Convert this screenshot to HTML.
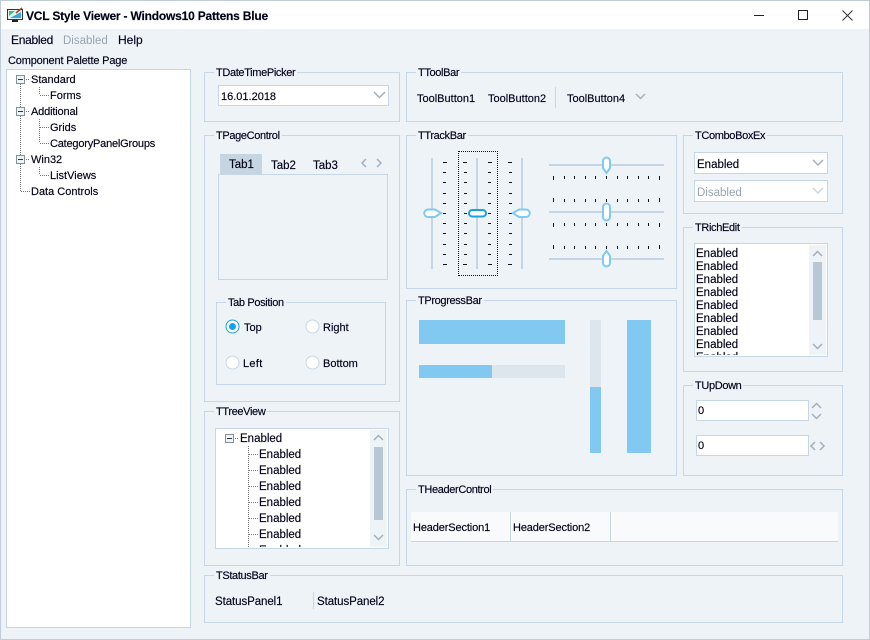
<!DOCTYPE html>
<html><head><meta charset="utf-8"><style>
html,body{margin:0;padding:0}
body{width:870px;height:640px;overflow:hidden;position:relative;background:#eef3f8;font:11px/14px "Liberation Sans",Arial,sans-serif;color:#000018;-webkit-text-stroke:.15px #000018}
.b,.f,.t,.l{position:absolute;box-sizing:border-box}
.b{border:1px solid #c6d6e5}
.f{background:#fff;border:1px solid #c6d6e5}
.t{white-space:nowrap;margin-top:1px}
.e{font-size:11.5px}
.l{white-space:nowrap;background:#eef3f8;padding:0 2px;margin-left:-2px;margin-top:1px;letter-spacing:-.35px;font-size:11px}
svg{position:absolute;left:0;top:0}
.clip{position:absolute;overflow:hidden}
.d{color:#98a4b0;-webkit-text-stroke:0}
</style></head><body>
<div class="b" style="left:0;top:0;width:870px;height:640px;border-color:#c0ccd8"></div>
<div style="position:absolute;left:1px;top:1px;width:868px;height:28px;background:#fff"></div>
<div class="t" style="left:26px;top:9px;margin-top:0;font-weight:bold;font-size:12px;letter-spacing:-.2px">VCL Style Viewer - Windows10 Pattens Blue</div>
<div class="t e" style="left:11px;top:33px;margin-top:0;font-size:12px;letter-spacing:-.3px">Enabled</div>
<div class="t e d" style="left:63px;top:33px">Disabled</div>
<div class="t" style="left:118px;top:33px;margin-top:0;font-size:12px">Help</div>
<div class="t" style="left:8px;top:53px;letter-spacing:-.17px">Component Palette Page</div>

<div class="f" style="left:6px;top:69px;width:185px;height:559px"></div>
<div class="t" style="left:31px;top:72px">Standard</div>
<div class="t" style="left:50px;top:88px">Forms</div>
<div class="t" style="left:31px;top:104px;letter-spacing:-.16px">Additional</div>
<div class="t" style="left:50px;top:120px">Grids</div>
<div class="t" style="left:50px;top:136px;letter-spacing:-.2px">CategoryPanelGroups</div>
<div class="t" style="left:31px;top:152px">Win32</div>
<div class="t" style="left:50px;top:168px">ListViews</div>
<div class="t" style="left:31px;top:184px">Data Controls</div>

<div class="b" style="left:204px;top:72px;width:196px;height:50px"></div>
<div class="l" style="left:216px;top:65px">TDateTimePicker</div>
<div class="f" style="left:218px;top:85px;width:171px;height:21px"></div>
<div class="t" style="left:221px;top:89px">16.01.2018</div>

<div class="b" style="left:204px;top:135px;width:196px;height:267px"></div>
<div class="l" style="left:216px;top:128px">TPageControl</div>
<div style="position:absolute;left:220px;top:154px;width:42px;height:21px;background:#c5d5e2"></div>
<div class="b" style="left:218px;top:174px;width:170px;height:106px"></div>
<div class="t e" style="left:229px;top:157px">Tab1</div>
<div class="t e" style="left:271px;top:158px">Tab2</div>
<div class="t e" style="left:313px;top:158px">Tab3</div>
<div class="b" style="left:216px;top:302px;width:170px;height:83px"></div>
<div class="l" style="left:228px;top:295px">Tab Position</div>
<div class="t" style="left:244px;top:320px">Top</div>
<div class="t" style="left:323px;top:320px">Right</div>
<div class="t" style="left:243px;top:356px;letter-spacing:.3px">Left</div>
<div class="t" style="left:323px;top:356px">Bottom</div>

<div class="b" style="left:204px;top:411px;width:196px;height:155px"></div>
<div class="l" style="left:216px;top:404px">TTreeView</div>
<div class="f" style="left:215px;top:428px;width:174px;height:121px"></div>
<div style="position:absolute;left:370px;top:430px;width:17px;height:117px;background:#eef3f8"></div>
<div style="position:absolute;left:374px;top:447px;width:9px;height:73px;background:#b8c7d4"></div>
<div class="t e" style="left:240px;top:431px">Enabled</div>
<div class="clip e" style="left:259px;top:446px;width:60px;height:101px">
<div class="t" style="left:0;top:1px">Enabled</div>
<div class="t" style="left:0;top:17px">Enabled</div>
<div class="t" style="left:0;top:33px">Enabled</div>
<div class="t" style="left:0;top:49px">Enabled</div>
<div class="t" style="left:0;top:65px">Enabled</div>
<div class="t" style="left:0;top:81px">Enabled</div>
<div class="t" style="left:0;top:97px">Enabled</div>
</div>

<div class="b" style="left:204px;top:575px;width:639px;height:48px"></div>
<div class="l" style="left:216px;top:568px">TStatusBar</div>
<div class="t e" style="left:215px;top:594px;letter-spacing:-.08px">StatusPanel1</div>
<div style="position:absolute;left:313px;top:592px;width:1px;height:17px;background:#c6d6e5"></div>
<div class="t e" style="left:317px;top:594px;letter-spacing:-.08px">StatusPanel2</div>

<div class="b" style="left:406px;top:72px;width:437px;height:50px"></div>
<div class="l" style="left:418px;top:65px">TToolBar</div>
<div class="t" style="left:417px;top:91px">ToolButton1</div>
<div class="t" style="left:488px;top:91px">ToolButton2</div>
<div style="position:absolute;left:555px;top:87px;width:1px;height:21px;background:#c6d6e5"></div>
<div class="t" style="left:567px;top:91px">ToolButton4</div>

<div class="b" style="left:406px;top:135px;width:271px;height:154px"></div>
<div class="l" style="left:418px;top:128px">TTrackBar</div>

<div class="b" style="left:406px;top:300px;width:271px;height:176px"></div>
<div class="l" style="left:418px;top:293px">TProgressBar</div>

<div class="b" style="left:683px;top:135px;width:160px;height:79px"></div>
<div class="l" style="left:695px;top:128px">TComboBoxEx</div>
<div class="f" style="left:694px;top:152px;width:134px;height:22px"></div>
<div class="t e" style="left:697px;top:157px">Enabled</div>
<div class="f" style="left:694px;top:180px;width:134px;height:22px"></div>
<div class="t e d" style="left:697px;top:185px">Disabled</div>

<div class="b" style="left:683px;top:227px;width:160px;height:145px"></div>
<div class="l" style="left:695px;top:220px">TRichEdit</div>
<div class="f" style="left:694px;top:243px;width:134px;height:114px"></div>
<div style="position:absolute;left:809px;top:245px;width:17px;height:110px;background:#eef3f8"></div>
<div style="position:absolute;left:813px;top:262px;width:9px;height:58px;background:#b8c7d4"></div>
<div class="clip e" style="left:696px;top:245px;width:60px;height:110px">
<div class="t" style="left:0;top:1px">Enabled</div>
<div class="t" style="left:0;top:14px">Enabled</div>
<div class="t" style="left:0;top:27px">Enabled</div>
<div class="t" style="left:0;top:40px">Enabled</div>
<div class="t" style="left:0;top:53px">Enabled</div>
<div class="t" style="left:0;top:66px">Enabled</div>
<div class="t" style="left:0;top:79px">Enabled</div>
<div class="t" style="left:0;top:92px">Enabled</div>
<div class="t" style="left:0;top:105px">Enabled</div>
</div>

<div class="b" style="left:683px;top:385px;width:160px;height:91px"></div>
<div class="l" style="left:695px;top:378px">TUpDown</div>
<div class="f" style="left:696px;top:400px;width:113px;height:21px"></div>
<div class="t" style="left:698px;top:403px">0</div>
<div class="f" style="left:696px;top:435px;width:113px;height:21px"></div>
<div class="t" style="left:698px;top:438px">0</div>

<div class="b" style="left:406px;top:489px;width:437px;height:77px"></div>
<div class="l" style="left:418px;top:482px">THeaderControl</div>
<div style="position:absolute;left:411px;top:512px;width:427px;height:30px;background:#f8fafc;border-bottom:1px solid #c6d6e5;box-sizing:border-box"></div>
<div style="position:absolute;left:510px;top:512px;width:1px;height:29px;background:#c6d6e5"></div>
<div style="position:absolute;left:610px;top:512px;width:1px;height:29px;background:#c6d6e5"></div>
<div class="t" style="left:413px;top:520px;letter-spacing:-.13px">HeaderSection1</div>
<div class="t" style="left:513px;top:520px;letter-spacing:-.13px">HeaderSection2</div>

<div style="position:absolute;left:458px;top:151px;width:40px;height:125px;box-sizing:border-box;border:1px dotted #111"></div>

<svg width="870" height="640" viewBox="0 0 870 640" fill="none">
<!-- app icon -->
<rect x="7.5" y="9.5" width="15" height="10" fill="#e8f4f4" stroke="#333"/>
<path d="M9 11h6l-6 5z" fill="#35c46a"/><path d="M10 18l11-6v6z" fill="#35a8e0"/>
<path d="M16 13l6-5" stroke="#b03a2e" stroke-width="1.5"/>
<path d="M12 21h6" stroke="#222" stroke-width="2"/>
<!-- window buttons -->
<path d="M754 15.5h10" stroke="#222"/>
<rect x="798.5" y="10.5" width="9" height="9" stroke="#222"/>
<path d="M842.5 10.5l10 10M852.5 10.5l-10 10" stroke="#333"/>
<!-- tree lines left -->
<g stroke="#777" stroke-dasharray="1 1">
<path d="M20.5 84V191M26 79.5h4M26 111.5h4M26 159.5h4M21 191.5h9"/>
<path d="M39.5 87V95M40 95.5h9M39.5 119V143M40 127.5h9M40 143.5h9M39.5 167V175M40 175.5h9"/>
<path d="M235 438.5h4M248.5 446V547M249 454.5h9M249 470.5h9M249 486.5h9M249 502.5h9M249 518.5h9M249 534.5h9"/>
</g>
<g fill="#eef3f8" stroke="#8a8f95">
<rect x="16.5" y="75.5" width="8" height="8"/><rect x="16.5" y="107.5" width="8" height="8"/><rect x="16.5" y="155.5" width="8" height="8"/>
<rect x="225.5" y="434.5" width="8" height="8"/>
</g>
<path d="M18 79.5h5M18 111.5h5M18 159.5h5M227 438.5h5" stroke="#333"/>
<!-- chevrons -->
<g stroke="#a3afbc" stroke-width="1.5">
<path d="M374 92l5.500 5.500 5.500-5.500"/>
<path d="M636 94l4.500 4.500 4.500-4.500"/>
<path d="M366 159l-4 4 4 4M377 159l4 4-4 4"/>
<path d="M813 160l5 5 5-5"/>
<path d="M813 188l5 5 5-5" stroke="#ccd5de"/>
<path d="M374 440l4.500-4.500 4.500 4.500M374 535l4.500 4.500 4.500-4.500"/>
<path d="M813 256l4.500-4.500 4.500 4.500M813 344l4.500 4.500 4.500-4.500"/>
<path d="M812 408l4.500-4.500 4.500 4.500M812 414l4.500 4.500 4.500-4.500"/>
<path d="M815 442l-4 4 4 4M820 442l4 4-4 4"/>
</g>
<!-- radios -->
<circle cx="232.500" cy="326.500" r="6.500" fill="#fff" stroke="#1ba1e2"/>
<circle cx="232.500" cy="326.500" r="3.500" fill="#1ba1e2"/>
<circle cx="312.500" cy="326.500" r="6.500" fill="#fff" stroke="#c6d6e5"/>
<circle cx="232.500" cy="362.500" r="6.500" fill="#fff" stroke="#c6d6e5"/>
<circle cx="312.500" cy="362.500" r="6.500" fill="#fff" stroke="#c6d6e5"/>
<!-- progress -->
<g shape-rendering="crispEdges">
<rect x="419" y="320" width="146" height="24" fill="#82c9f1"/>
<rect x="419" y="365" width="146" height="13" fill="#dde5ed"/>
<rect x="419" y="365" width="73" height="13" fill="#82c9f1"/>
<rect x="590" y="320" width="11" height="133" fill="#dde5ed"/>
<rect x="590" y="387" width="11" height="66" fill="#82c9f1"/>
<rect x="627" y="320" width="24" height="133" fill="#82c9f1"/>
</g>
<!-- track bars -->
<g shape-rendering="crispEdges" fill="#c6d5e3">
<rect x="431" y="158" width="2" height="111"/><rect x="476" y="158" width="2" height="111"/><rect x="521" y="158" width="2" height="111"/>
<rect x="549" y="164" width="115" height="2"/><rect x="549" y="211" width="115" height="2"/><rect x="549" y="258" width="115" height="2"/>
</g>
<g shape-rendering="crispEdges" fill="#111">
<path d="M443 162h4v1h-4zM443 172h3v1h-3zM443 182h3v1h-3zM443 193h3v1h-3zM443 203h3v1h-3zM443 213h3v1h-3zM443 223h3v1h-3zM443 233h3v1h-3zM443 244h3v1h-3zM443 254h3v1h-3zM443 264h4v1h-4z"/>
<path d="M463 162h4v1h-4zM464 172h3v1h-3zM464 182h3v1h-3zM464 193h3v1h-3zM464 203h3v1h-3zM464 213h3v1h-3zM464 223h3v1h-3zM464 233h3v1h-3zM464 244h3v1h-3zM464 254h3v1h-3zM463 264h4v1h-4z"/>
<path d="M488 162h4v1h-4zM488 172h3v1h-3zM488 182h3v1h-3zM488 193h3v1h-3zM488 203h3v1h-3zM488 213h3v1h-3zM488 223h3v1h-3zM488 233h3v1h-3zM488 244h3v1h-3zM488 254h3v1h-3zM488 264h4v1h-4z"/>
<path d="M508 162h4v1h-4zM509 172h3v1h-3zM509 182h3v1h-3zM509 193h3v1h-3zM509 203h3v1h-3zM509 213h3v1h-3zM509 223h3v1h-3zM509 233h3v1h-3zM509 244h3v1h-3zM509 254h3v1h-3zM508 264h4v1h-4z"/>
<path d="M553 176h1v4h-1zM564 176h1v3h-1zM574 176h1v3h-1zM585 176h1v3h-1zM595 176h1v3h-1zM606 176h1v3h-1zM617 176h1v3h-1zM627 176h1v3h-1zM638 176h1v3h-1zM648 176h1v3h-1zM659 176h1v4h-1z"/>
<path d="M553 198h1v4h-1zM564 199h1v3h-1zM574 199h1v3h-1zM585 199h1v3h-1zM595 199h1v3h-1zM606 199h1v3h-1zM617 199h1v3h-1zM627 199h1v3h-1zM638 199h1v3h-1zM648 199h1v3h-1zM659 198h1v4h-1z"/>
<path d="M553 223h1v4h-1zM564 223h1v3h-1zM574 223h1v3h-1zM585 223h1v3h-1zM595 223h1v3h-1zM606 223h1v3h-1zM617 223h1v3h-1zM627 223h1v3h-1zM638 223h1v3h-1zM648 223h1v3h-1zM659 223h1v4h-1z"/>
<path d="M553 245h1v4h-1zM564 246h1v3h-1zM574 246h1v3h-1zM585 246h1v3h-1zM595 246h1v3h-1zM606 246h1v3h-1zM617 246h1v3h-1zM627 246h1v3h-1zM638 246h1v3h-1zM648 246h1v3h-1zM659 245h1v4h-1z"/>
</g>
<g fill="#fff" stroke="#82c9f1" stroke-width="2">
<path d="M428 209.500h7l6 3.500-6 4h-7a3.700 3.700 0 0 1 0-7.500z"/>
<path d="M526 209.500h-7l-6 3.500 6 4h7a3.700 3.700 0 0 0 0-7.500z"/>
<path d="M603 161a3.500 3.500 0 0 1 7 0v7l-3.500 5-3.500-5z"/>
<rect x="603" y="203.500" width="7" height="17" rx="3.500"/>
<path d="M603 263a3.500 3.500 0 0 0 7 0v-7l-3.500-5-3.500 5z"/>
</g>
<rect x="469" y="210" width="17" height="6.500" rx="3.200" fill="#fff" stroke="#1ba1e2" stroke-width="2"/>
</svg>
</body></html>
